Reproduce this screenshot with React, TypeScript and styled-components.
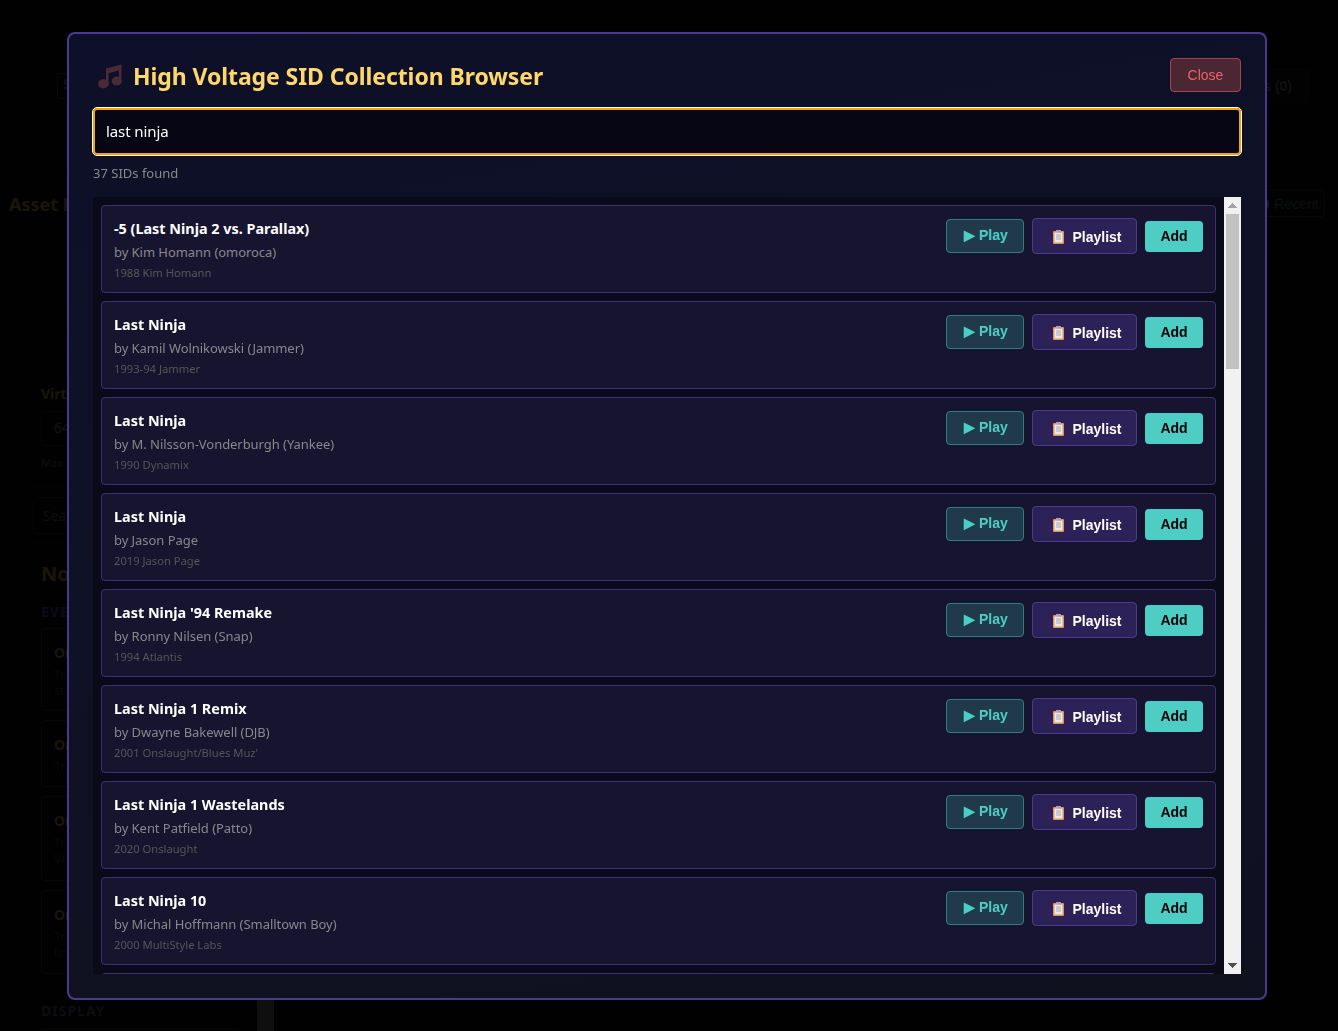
import styled, { createGlobalStyle } from 'styled-components';

const songs = [
  { title: '-5 (Last Ninja 2 vs. Parallax)', author: 'Kim Homann (omoroca)', released: '1988 Kim Homann' },
  { title: 'Last Ninja', author: 'Kamil Wolnikowski (Jammer)', released: '1993-94 Jammer' },
  { title: 'Last Ninja', author: 'M. Nilsson-Vonderburgh (Yankee)', released: '1990 Dynamix' },
  { title: 'Last Ninja', author: 'Jason Page', released: '2019 Jason Page' },
  { title: "Last Ninja '94 Remake", author: 'Ronny Nilsen (Snap)', released: '1994 Atlantis' },
  { title: 'Last Ninja 1 Remix', author: 'Dwayne Bakewell (DJB)', released: "2001 Onslaught/Blues Muz'" },
  { title: 'Last Ninja 1 Wastelands', author: 'Kent Patfield (Patto)', released: '2020 Onslaught' },
  { title: 'Last Ninja 10', author: 'Michal Hoffmann (Smalltown Boy)', released: '2000 MultiStyle Labs' },
];

const eventCards = [
  { height: 83, name: 'On', lines: ['Tr', 'st'] },
  { height: 67, name: 'On', lines: ['Tr'] },
  { height: 85, name: 'On', lines: ['Tr', 'Vi'] },
  { height: 84, name: 'On', lines: ['Tr', 'lin'] },
];

function NoteIcon() {
  return (
    <NoteSvg viewBox="0 0 26 26" aria-hidden="true">
      <path d="M9 5.5 24.5 1.5V18h-2.6V7.5L11.6 10.2V21.5H9Z" />
      <ellipse cx="6.4" cy="20.8" rx="5.4" ry="4.6" />
      <ellipse cx="19.8" cy="18" rx="5" ry="4.5" />
    </NoteSvg>
  );
}

function ClipboardIcon() {
  return (
    <ClipSvg viewBox="0 0 11 14" aria-hidden="true">
      <rect x="0" y="1" width="11" height="13" rx="1" fill="#e0954f" />
      <rect x="1.5" y="2.5" width="8" height="10" fill="#eceaf0" />
      <path d="M3 5h5M3 7h5M3 9h5" stroke="#a9a6b8" strokeWidth="1" />
      <rect x="3" y="0" width="5" height="2.5" fill="#a8a4ad" />
    </ClipSvg>
  );
}

function BackgroundPage() {
  return (
    <Page>
      <Header>
        <Logo>S</Logo>
        <HeaderCount>Assets (0)</HeaderCount>
      </Header>
      <AssetBar>
        <AssetTitle>Asset Browser</AssetTitle>
        <RecentButton>🕓 Recent</RecentButton>
      </AssetBar>
      <Workspace>
        <Sidebar>
          <FieldBlock>
            <FieldLabel>Virtual</FieldLabel>
            <FieldInput>64</FieldInput>
            <FieldHint>Max</FieldHint>
          </FieldBlock>
          <SearchBlock>
            <SearchInput>Search</SearchInput>
          </SearchBlock>
          <NodeBlock>
            <NodeTitle>Nodes</NodeTitle>
            <SectionLabel>EVENTS</SectionLabel>
            {eventCards.map((card, index) => (
              <EventCard key={index} $height={card.height}>
                <EventName>{card.name}</EventName>
                {card.lines.map((line) => (
                  <EventLine key={line}>{line}</EventLine>
                ))}
              </EventCard>
            ))}
            <DisplayLabel>DISPLAY</DisplayLabel>
            <DisplayBox />
          </NodeBlock>
        </Sidebar>
        <SideScroll />
      </Workspace>
    </Page>
  );
}

export default function App() {
  return (
    <>
      <GlobalStyle />
      <BackgroundPage />
      <Overlay>
        <Modal>
          <ModalHeader>
            <ModalTitle>
              <NoteIcon />
              High Voltage SID Collection Browser
            </ModalTitle>
            <CloseButton>Close</CloseButton>
          </ModalHeader>
          <SearchBox readOnly value="last ninja" />
          <ResultCount>37 SIDs found</ResultCount>
          <ResultPane>
            <ResultList>
              {songs.map((song, index) => (
                <SongCard key={index}>
                  <SongInfo>
                    <SongTitle>{song.title}</SongTitle>
                    <SongAuthor>by {song.author}</SongAuthor>
                    <SongReleased>{song.released}</SongReleased>
                  </SongInfo>
                  <SongActions>
                    <PlayButton>▶ Play</PlayButton>
                    <PlaylistButton>
                      <ClipboardIcon />
                      Playlist
                    </PlaylistButton>
                    <AddButton>Add</AddButton>
                  </SongActions>
                </SongCard>
              ))}
              <SongCard />
            </ResultList>
            <ScrollBar>
              <ScrollArrow $direction="up" />
              <ScrollThumb />
              <ScrollTrack />
              <ScrollArrow $direction="down" />
            </ScrollBar>
          </ResultPane>
        </Modal>
      </Overlay>
    </>
  );
}

const GlobalStyle = createGlobalStyle`
  html, body {
    margin: 0;
    height: 100%;
    overflow: hidden;
    background: #000;
  }
  * {
    box-sizing: border-box;
  }
`;

const uiFont = `"Noto Sans", "Open Sans", sans-serif`;
const buttonFont = `"Liberation Sans", Arial, sans-serif`;

/* page behind the dialog */
const Page = styled.div`
  height: 1031px;
  overflow: hidden;
  background: #0a0a14;
  font-family: ${uiFont};
`;

const Header = styled.div`
  height: 173px;
  display: flex;
  align-items: center;
  justify-content: space-between;
  padding: 0 29px 0 57px;
  border-bottom: 1px solid #1e1e2c;
`;

const Logo = styled.div`
  width: 20px;
  height: 26px;
  border: 1px solid #7a6a30;
  border-radius: 4px;
  color: #4ecdc4;
  font-size: 14px;
  font-weight: 700;
  text-align: center;
`;

const HeaderCount = styled.div`
  width: 110px;
  height: 34px;
  display: flex;
  align-items: center;
  justify-content: flex-end;
  padding-right: 16px;
  border: 1px solid #2a2a3a;
  border-radius: 4px;
  background: #181824;
  color: #999;
  font-family: ${buttonFont};
  font-size: 14px;
  font-weight: 700;
`;

const AssetBar = styled.div`
  height: 161px;
  display: flex;
  justify-content: space-between;
  align-items: flex-start;
  padding: 17px 13px 0 9px;
  border-bottom: 1px solid #1e1e2c;
`;

const AssetTitle = styled.div`
  color: #ffd166;
  font-size: 18px;
  line-height: 28px;
  font-weight: 700;
`;

const RecentButton = styled.div`
  width: 78px;
  height: 27px;
  display: flex;
  align-items: center;
  justify-content: center;
  border: 1px solid #1c6a52;
  border-radius: 4px;
  color: #37b98c;
  font-family: ${buttonFont};
  font-size: 14px;
  white-space: nowrap;
`;

const Workspace = styled.div`
  height: 697px;
  display: flex;
  padding-left: 26px;
`;

const Sidebar = styled.div`
  width: 231px;
  height: 100%;
  border-left: 1px solid #1e1e2c;
`;

const FieldBlock = styled.div`
  height: 154px;
  padding: 50px 0 0 14px;
  border-bottom: 1px solid #1e1e2c;
`;

const FieldLabel = styled.div`
  color: #ffd166;
  font-size: 14px;
  line-height: 20px;
  font-weight: 700;
`;

const FieldInput = styled.div`
  width: 200px;
  height: 35px;
  margin-top: 7px;
  padding: 6px 12px;
  border: 1px solid #3a3a4c;
  border-radius: 4px;
  color: #bbb;
  font-size: 14px;
`;

const FieldHint = styled.div`
  margin-top: 9px;
  color: #888;
  font-size: 11px;
`;

const SearchBlock = styled.div`
  height: 56px;
  padding: 9px 0 0 6px;
  border-bottom: 1px solid #1e1e2c;
`;

const SearchInput = styled.div`
  width: 215px;
  height: 37px;
  padding: 8px 9px;
  border: 1px solid #3a3a4c;
  border-radius: 4px;
  color: #777;
  font-size: 14px;
`;

const NodeBlock = styled.div`
  padding: 16px 0 0 14px;
`;

const NodeTitle = styled.div`
  color: #ffd166;
  font-size: 20px;
  line-height: 28px;
  font-weight: 700;
`;

const SectionLabel = styled.div`
  margin: 15px 0 7px;
  color: #5a6fd8;
  font-size: 14px;
  line-height: 18px;
  font-weight: 700;
  letter-spacing: 1px;
`;

const DisplayLabel = styled(SectionLabel)`
  margin: 28px 0 8px;
  color: #7a7aa0;
`;

const EventCard = styled.div<{ $height: number }>`
  width: 200px;
  height: ${(p) => p.$height}px;
  margin-bottom: 9px;
  padding: 13px 12px;
  border: 1px solid #4a4a30;
  border-radius: 4px;
`;

const EventName = styled.div`
  margin-bottom: 3px;
  color: #ffd166;
  font-size: 14px;
  line-height: 22px;
  font-weight: 700;
`;

const EventLine = styled.div`
  color: #555;
  font-size: 12px;
  line-height: 16px;
`;

const DisplayBox = styled.div`
  width: 200px;
  height: 40px;
  border: 1px solid #4a4a30;
  border-radius: 4px;
`;

const SideScroll = styled.div`
  width: 17px;
  height: 100%;
  background: #9a9a9a;
`;

/* dialog */
const Overlay = styled.div`
  position: fixed;
  inset: 0;
  display: flex;
  justify-content: center;
  align-items: center;
  padding-right: 4px;
  background: rgba(0, 0, 0, 0.9);
  font-family: ${uiFont};
`;

const Modal = styled.div`
  width: 1200px;
  height: 968px;
  display: flex;
  flex-direction: column;
  padding: 24px;
  border: 2px solid #4a3a8f;
  border-radius: 8px;
  background: linear-gradient(170deg, #0e1029, #10111f);
`;

const ModalHeader = styled.div`
  height: 49px;
  flex: none;
  display: flex;
  justify-content: space-between;
  align-items: flex-start;
`;

const ModalTitle = styled.div`
  display: flex;
  align-items: center;
  height: 37px;
  color: #ffd76b;
  font-size: 23px;
  font-weight: 700;
  letter-spacing: -0.08px;
`;

const NoteSvg = styled.svg`
  width: 26px;
  height: 26px;
  margin: 0 10px 0 4px;
  fill: #4a2b35;
`;

const CloseButton = styled.button`
  width: 71px;
  height: 34px;
  padding: 0;
  border: 1px solid #a5434f;
  border-radius: 4px;
  background: #4a2733;
  color: #f0616a;
  font-family: ${buttonFont};
  font-size: 14px;
`;

const SearchBox = styled.input`
  width: 100%;
  height: 47px;
  flex: none;
  margin-top: 1px;
  padding: 0 11px;
  border: 2px solid #f0a500;
  border-radius: 4px;
  outline: 1px solid #ffffff;
  background: #070614;
  color: #fff;
  font-family: ${uiFont};
  font-size: 15px;
  letter-spacing: -0.1px;
`;

const ResultCount = styled.div`
  flex: none;
  margin-top: 8px;
  height: 34px;
  color: #888;
  font-size: 13px;
  line-height: 20px;
`;

const ResultPane = styled.div`
  flex: 1;
  min-height: 0;
  display: flex;
  background: #0a0a18;
`;

const ResultList = styled.div`
  flex: 1;
  min-width: 0;
  overflow: hidden;
  padding: 8px;
`;

const ScrollBar = styled.div`
  width: 17px;
  flex: none;
  display: flex;
  flex-direction: column;
  background: #f1f1f1;
`;

const ScrollArrow = styled.div<{ $direction: 'up' | 'down' }>`
  height: 17px;
  flex: none;
  background: ${(p) =>
      p.$direction === 'up'
        ? 'conic-gradient(from 135deg at 50% 0, #a3a3a3 90deg, transparent 0)'
        : 'conic-gradient(from -45deg at 50% 100%, #505050 90deg, transparent 0)'}
    center / 9px 5px no-repeat;
`;

const ScrollThumb = styled.div`
  height: 155px;
  flex: none;
  margin: 0 2px;
  background: #c1c1c1;
`;

const ScrollTrack = styled.div`
  flex: 1;
`;

const SongCard = styled.div`
  height: 88px;
  margin-bottom: 8px;
  display: flex;
  justify-content: space-between;
  align-items: flex-start;
  padding: 12px;
  border: 1px solid #3a2f78;
  border-radius: 4px;
  background: #17142f;
`;

const SongInfo = styled.div`
  min-width: 0;
`;

const SongTitle = styled.div`
  color: #fff;
  font-size: 14.4px;
  line-height: 22px;
  font-weight: 700;
`;

const SongAuthor = styled.div`
  margin-top: 1px;
  color: #888;
  font-size: 13px;
  line-height: 22px;
  letter-spacing: -0.05px;
`;

const SongReleased = styled.div`
  color: #555;
  font-size: 11.2px;
  line-height: 20px;
`;

const SongActions = styled.div`
  display: flex;
  align-items: center;
  gap: 8px;
`;

const ActionButton = styled.button`
  padding: 0;
  display: flex;
  align-items: center;
  justify-content: center;
  border-radius: 4px;
  font-family: ${buttonFont};
  font-size: 14px;
  font-weight: 700;
`;

const PlayButton = styled(ActionButton)`
  width: 78px;
  height: 34px;
  padding: 0 0 2px 2px;
  border: 1px solid #2f7f87;
  background: #203a4c;
  color: #4ecdc4;
`;

const PlaylistButton = styled(ActionButton)`
  width: 105px;
  height: 36px;
  gap: 8px;
  padding: 2px 0 0 6px;
  border: 1px solid #4a3a8f;
  background: #2d2257;
  color: #fff;
`;

const ClipSvg = styled.svg`
  width: 11px;
  height: 14px;
`;

const AddButton = styled(ActionButton)`
  width: 58px;
  height: 31px;
  margin-top: 1px;
  border: none;
  background: #4ecdc4;
  color: #000;
`;
